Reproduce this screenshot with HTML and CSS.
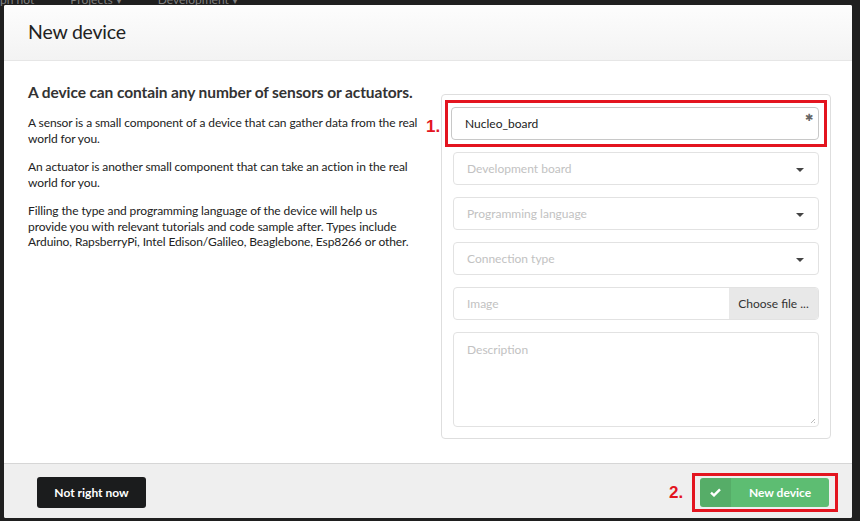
FILE: index.html
```html
<!DOCTYPE html>
<html>
<head>
<meta charset="utf-8">
<link rel="stylesheet" href="styles.css">
</head>
<body>
<div class="backdrop">
  <div class="bgnav"><span>ph not</span><span>Projects ▾</span><span>Development ▾</span></div>
  <div class="modal">
    <div class="modal-header">New device</div>
    <div class="modal-body">
      <div class="intro">
        <h2>A device can contain any number of sensors or actuators.</h2>
        <p>A sensor is a small component of a device that can gather data from the real world for you.</p>
        <p>An actuator is another small component that can take an action in the real world for you.</p>
        <p>Filling the type and programming language of the device will help us provide you with relevant tutorials and code sample after. Types include Arduino, RapsberryPi, Intel Edison/Galileo, Beaglebone, Esp8266 or other.</p>
      </div>
      <div class="form">
        <div class="mark mark-input">
          <span class="mark-num">1.</span>
          <div class="field filled">Nucleo_board<span class="req">✱</span></div>
        </div>
        <div class="field select"><span class="ph">Development board</span><span class="caret"></span></div>
        <div class="field select"><span class="ph">Programming language</span><span class="caret"></span></div>
        <div class="field select"><span class="ph">Connection type</span><span class="caret"></span></div>
        <div class="field file"><span class="ph file-ph">Image</span><span class="choose">Choose file ...</span></div>
        <div class="field textarea"><span class="ph">Description</span><span class="grip"></span></div>
      </div>
    </div>
    <div class="modal-footer">
      <button class="btn-dark">Not right now</button>
      <div class="mark mark-btn">
        <span class="mark-num">2.</span>
        <button class="btn-green"><span class="btn-icon"><svg width="11" height="9" viewBox="0 0 11 9"><path d="M1 4.6 L4 7.4 L10 1.4" fill="none" stroke="#fff" stroke-width="2.4"/></svg></span><span class="btn-label">New device</span></button>
      </div>
    </div>
  </div>
</div>
</body>
</html>
```
FILE: styles.css
```css
html, body {
  margin: 0;
  padding: 0;
  background: #1f1f1f;
  font-family: Lato, "Open Sans", sans-serif;
}
.backdrop {
  position: relative;
  width: 860px;
  height: 521px;
  padding: 5px 8px 3px 4px;
  box-sizing: border-box;
  overflow: hidden;
}
.bgnav {
  position: absolute;
  top: -8px;
  left: 0;
  font-size: 12px;
  color: #7e7e7e;
  display: flex;
  gap: 36px;
}
.modal {
  position: relative;
  height: 513px;
  background: #fff;
  border-radius: 2px;
  display: flex;
  flex-direction: column;
  overflow: hidden;
}
.modal-header {
  height: 56px;
  box-sizing: border-box;
  padding: 15px 24px 0;
  font-size: 19.5px;
  color: #222;
  background: linear-gradient(#fdfdfd, #f3f3f3);
  border-bottom: 1px solid #e6e6e6;
  letter-spacing: -0.2px;
}
.modal-body {
  flex: 1;
  display: flex;
  padding: 0 20px 0 24px;
  gap: 23px;
}
.intro {
  width: 390px;
  padding-top: 22px;
  color: #222;
}
.intro h2 {
  font-size: 15.5px;
  font-weight: 700;
  margin: 0 0 14px;
  color: #333;
  letter-spacing: -0.1px;
  white-space: nowrap;
}
.intro p {
  font-size: 12px;
  line-height: 15.5px;
  margin: 0 0 13px;
  letter-spacing: -0.1px;
}
.form {
  margin-top: 33px;
  width: 366px;
  height: 320px;
  border: 1px solid #dedede;
  border-radius: 4px;
  padding: 12px 11px 11px;
  display: flex;
  flex-direction: column;
  gap: 12px;
}
.field {
  position: relative;
  height: 33px;
  box-sizing: border-box;
  border: 1px solid #e2e2e2;
  border-radius: 4px;
  display: flex;
  align-items: center;
  padding: 0 13px;
  font-size: 12px;
  color: #222;
}
.filled {
  border-color: #c8c8c8;
}
.ph {
  color: #c2c2c2;
}
.req {
  position: absolute;
  right: 5px;
  top: 3px;
  font-size: 10px;
  color: #666;
}
.caret {
  position: absolute;
  right: 14px;
  top: 15px;
  width: 0;
  height: 0;
  border-left: 4px solid transparent;
  border-right: 4px solid transparent;
  border-top: 4px solid #444;
}
.file {
  padding: 0 0 0 13px;
  overflow: hidden;
}
.file-ph {
  flex: 1;
}
.choose {
  width: 89px;
  height: 100%;
  background: #e8e8e8;
  color: #333;
  display: flex;
  align-items: center;
  justify-content: center;
  font-size: 12px;
}
.textarea {
  height: 95px;
  align-items: flex-start;
  padding-top: 9px;
}
.grip {
  position: absolute;
  right: 3px;
  bottom: 3px;
  width: 5px;
  height: 5px;
  background: linear-gradient(135deg, transparent 55%, #bbb 55%, #bbb 65%, transparent 65%, transparent 80%, #bbb 80%);
}
.mark {
  position: relative;
  border: 3px solid #e3141f;
}
.mark-input {
  margin: -7px -8px -7px;
  padding: 4px 5px 4px 3px;
}
.mark-num {
  position: absolute;
  color: #e3141f;
  font-weight: 700;
  font-family: "Liberation Sans", Arial, sans-serif;
  font-size: 17px;
}
.mark-input .mark-num {
  left: -22px;
  top: 14px;
}
.modal-footer {
  height: 55px;
  box-sizing: border-box;
  border-top: 1px solid #d6d6d6;
  background: #efefef;
  display: flex;
  align-items: center;
  justify-content: space-between;
  padding: 0 14px 0 33px;
}
.btn-dark {
  width: 109px;
  height: 31px;
  border: none;
  border-radius: 3px;
  background: #1b1c1d;
  color: #fff;
  font-family: Lato, sans-serif;
  font-weight: 700;
  font-size: 12px;
  margin-top: 2px;
}
.mark-btn {
  padding: 2px 6px 2px 5px;
  margin-top: 2px;
}
.mark-btn .mark-num {
  left: -26px;
  top: 7px;
}
.btn-green {
  display: flex;
  width: 129px;
  height: 29px;
  padding: 0;
  border: none;
  border-radius: 3px;
  overflow: hidden;
  font-family: Lato, sans-serif;
}
.btn-icon {
  width: 31px;
  background: #56ad68;
  display: flex;
  align-items: center;
  justify-content: center;
}
.btn-label {
  flex: 1;
  background: #5dbd72;
  color: #fff;
  font-weight: 700;
  font-size: 12px;
  display: flex;
  align-items: center;
  justify-content: center;
}
```
